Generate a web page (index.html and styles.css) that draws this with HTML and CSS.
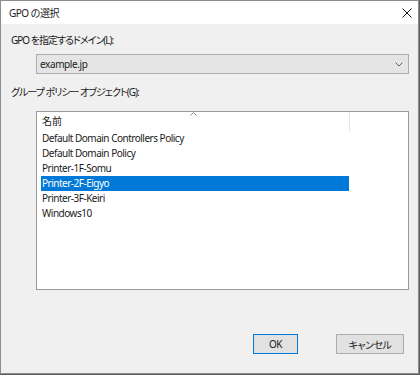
FILE: index.html
```html
<!DOCTYPE html>
<html lang="ja">

<head>
    <meta charset="UTF-8">
    <meta name="viewport" content="width=device-width, initial-scale=1.0">
    <title>GPO の選択</title>
    <link rel="stylesheet" href="styles.css">
</head>

<body>
    <div class="window">
        <div class="titlebar">
            <span class="title">GPO の選択</span>
            <svg class="close" width="10" height="10" viewBox="0 0 10 10">
                <path d="M0.5 0.5 L9.5 9.5 M9.5 0.5 L0.5 9.5" stroke="#1a1a1a" stroke-width="1" fill="none"/>
            </svg>
        </div>

        <div class="content">
            <p class="label">GPO を指定するドメイン(L):</p>
            <div class="combo">
                <span>example.jp</span>
                <svg width="8" height="5" viewBox="0 0 8 5">
                    <path d="M0.5 0.5 L4 4 L7.5 0.5" stroke="#606060" stroke-width="1" fill="none"/>
                </svg>
            </div>

            <p class="label label-list">グループ ポリシー オブジェクト(G):</p>
            <div class="listview">
                <div class="list-header">
                    <div class="col-name">
                        <svg class="sort" width="7" height="4" viewBox="0 0 7 4">
                            <path d="M0.5 3.5 L3.5 0.5 L6.5 3.5" stroke="#8a8a8a" stroke-width="1" fill="none"/>
                        </svg>
                        名前
                    </div>
                </div>
                <ul class="rows">
                    <li>Default Domain Controllers Policy</li>
                    <li>Default Domain Policy</li>
                    <li>Printer-1F-Somu</li>
                    <li class="selected">Printer-2F-Eigyo</li>
                    <li>Printer-3F-Keiri</li>
                    <li>Windows10</li>
                </ul>
            </div>

            <div class="buttons">
                <button class="btn btn-default">OK</button>
                <button class="btn btn-cancel">キャンセル</button>
            </div>
        </div>
    </div>
</body>

</html>
```

FILE: styles.css
```css
/* Reset some default styles */
* {
    margin: 0;
    padding: 0;
    box-sizing: border-box;
}

body {
    background-color: #5f5f5f;
    font-family: "Noto Sans", "Noto Sans CJK JP", sans-serif;
    font-size: 10px;
    font-feature-settings: "palt";
    color: #1a1a1a;
}

.window {
    width: 419px;
    height: 374px;
    background-color: #f0f0f0;
    border: 1px solid #8c8c8c;
}

.titlebar {
    height: 23px;
    background-color: #fff;
    display: flex;
    align-items: center;
    justify-content: space-between;
    padding: 0 6px 0 8px;
}

.title {
    letter-spacing: -0.5px;
}

.close {
    display: block;
}

.content {
    padding: 9px 0 0 10px;
}

.label {
    height: 15px;
    line-height: 15px;
    letter-spacing: -1px;
}

.combo {
    margin: 6px 9px 0 25px;
    height: 20px;
    background-color: #e5e5e5;
    border: 1px solid #adadad;
    display: flex;
    align-items: center;
    justify-content: space-between;
    padding: 0 5px 0 3px;
    letter-spacing: -0.4px;
}

.combo svg {
    display: block;
}

.label-list {
    margin-top: 11px;
}

.listview {
    margin: 11px 9px 0 25px;
    height: 179px;
    background-color: #fff;
    border: 1px solid #9a9a9a;
}

.list-header {
    height: 19px;
    display: flex;
}

.col-name {
    position: relative;
    width: 313px;
    border-right: 1px solid #e5e5e5;
    padding-left: 5px;
    line-height: 19px;
}

.sort {
    position: absolute;
    top: 0;
    left: 153px;
}

.rows {
    list-style: none;
    padding-left: 4px;
}

.rows li {
    width: 308px;
    height: 15px;
    line-height: 15px;
    padding-left: 1px;
    white-space: nowrap;
    letter-spacing: -0.5px;
}

.rows li.selected {
    background-color: #0078d7;
    color: #fff;
}

.buttons {
    display: flex;
    justify-content: flex-end;
    gap: 38px;
    margin: 44px 14px 0 0;
}

.btn {
    height: 20px;
    font-family: inherit;
    font-size: 10px;
    font-feature-settings: "palt";
    letter-spacing: -0.5px;
    color: #1a1a1a;
    background-color: #e1e1e1;
    border: 1px solid #adadad;
}

.btn-default {
    width: 45px;
    border-color: #0078d7;
}

.btn-cancel {
    width: 68px;
}
```
